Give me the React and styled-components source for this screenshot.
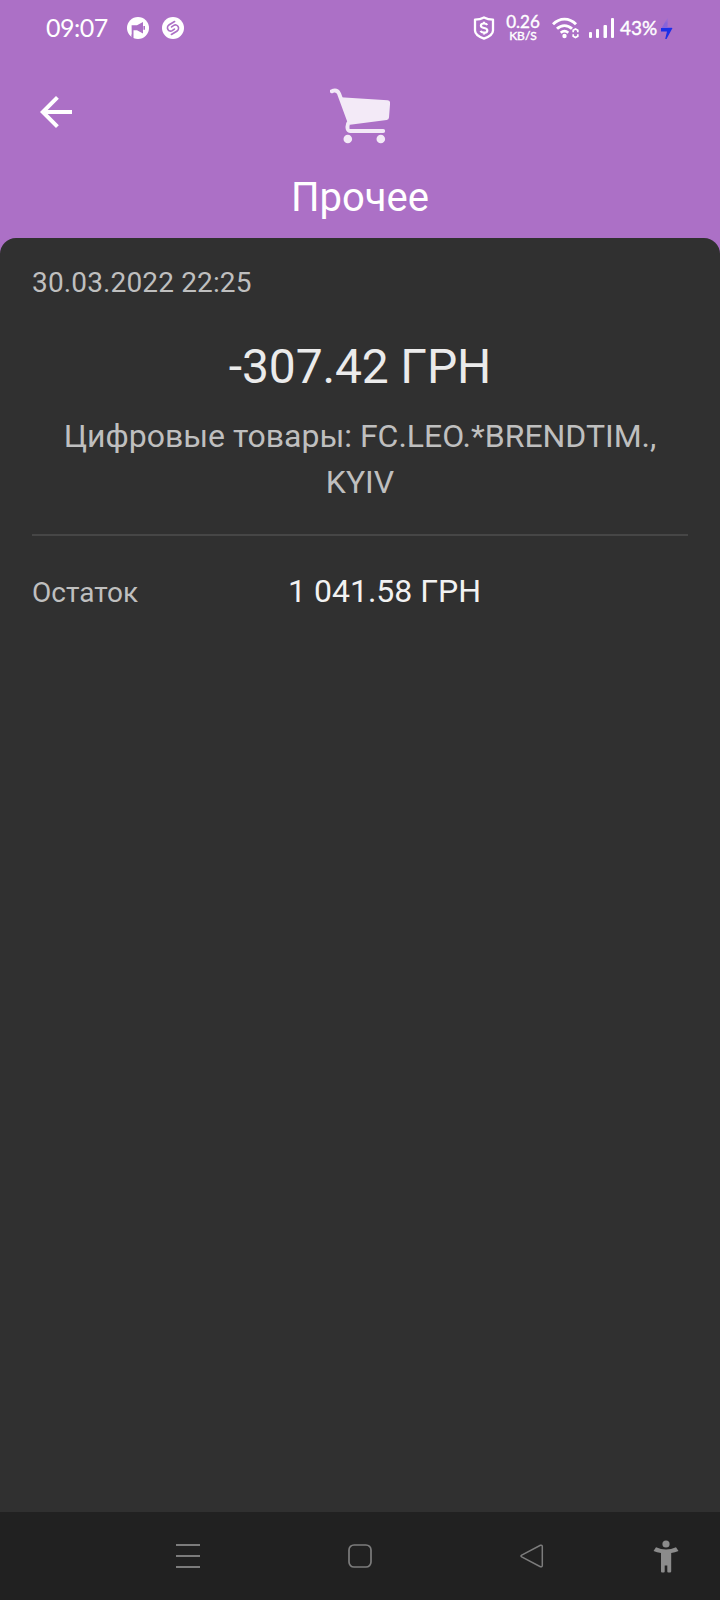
import React from 'react';
import styled, { createGlobalStyle } from 'styled-components';

const GlobalStyle = createGlobalStyle`
  * {
    box-sizing: border-box;
  }
  body {
    margin: 0;
    background-color: #ac70c6;
    font-family: Roboto, sans-serif;
  }
  svg {
    display: block;
    flex-shrink: 0;
  }
`;

const Screen = styled.div`
  display: flex;
  flex-direction: column;
  width: 720px;
  height: 1600px;
  background-color: #ac70c6;
`;

const StatusBar = styled.div`
  display: flex;
  justify-content: space-between;
  align-items: center;
  height: 56px;
  padding: 0 47px 0 46px;
  color: #ffffff;
  font-family: Lato, sans-serif;
`;
const StatusGroup = styled.div`
  display: flex;
  align-items: center;
  gap: ${({ $gap }) => $gap || 0}px;
`;
const Clock = styled.span`
  width: 68px;
  padding-bottom: 2px;
  font-size: 25px;
  line-height: 30px;
  letter-spacing: -0.5px;
`;
const Speed = styled.div`
  display: flex;
  flex-direction: column;
  align-items: center;
  gap: 1px;
  width: 36px;
  margin: 0 11px 0 10px;
  -webkit-text-stroke: 0.4px #ffffff;
`;
const SpeedValue = styled.span`
  font-size: 17px;
  line-height: 14px;
`;
const SpeedUnit = styled.span`
  font-size: 12px;
  line-height: 11px;
`;
const Battery = styled.span`
  width: 41px;
  margin-left: 5px;
  padding-bottom: 1px;
  font-size: 19px;
  line-height: 24px;
  -webkit-text-stroke: 0.4px #ffffff;
`;

const Header = styled.header`
  height: 182px;
  padding: 32px 32px 0;
`;
const HeaderRow = styled.div`
  display: grid;
  grid-template-columns: 1fr auto 1fr;
  align-items: start;
  height: 56px;
`;
const BackButton = styled.button`
  width: 48px;
  height: 48px;
  padding: 0;
  border: none;
  background: none;
  color: #ffffff;
`;
const Title = styled.h1`
  margin: 30px 0 0;
  color: #ffffff;
  font-size: 40px;
  font-weight: 400;
  line-height: 48px;
  text-align: center;
`;

const Card = styled.main`
  flex: 1;
  padding: 29px 32px 0;
  border-radius: 16px 16px 0 0;
  background-color: #303030;
`;
const DateText = styled.p`
  margin: 0;
  color: #bfbfbf;
  font-size: 28px;
  line-height: 32px;
  letter-spacing: 0.14px;
`;
const Amount = styled.p`
  margin: 40px 0 0;
  color: #ebebeb;
  font-size: 48px;
  line-height: 56px;
  letter-spacing: -0.15px;
  text-align: center;
`;
const Description = styled.p`
  margin: 18px 0 0;
  padding: 0 24px;
  color: #bfbfbf;
  font-size: 32px;
  line-height: 46px;
  letter-spacing: -0.02px;
  text-align: center;
`;
const Divider = styled.hr`
  height: 2px;
  margin: 29px 0 0;
  border: none;
  background-color: #464646;
`;
const Row = styled.div`
  display: grid;
  grid-template-columns: 256px 1fr;
  align-items: baseline;
  margin-top: 35px;
  line-height: 40px;
`;
const Label = styled.span`
  color: #bfbfbf;
  font-size: 28px;
`;
const Value = styled.span`
  color: #f2f2f2;
  font-size: 32px;
`;

const NavBar = styled.nav`
  display: grid;
  grid-template-columns: repeat(3, 172px) 95px;
  align-items: center;
  justify-items: center;
  height: 88px;
  padding-left: 102px;
  background-color: #212121;
  color: #7c7c7c;
`;

const MegaphoneIcon = () => (
  <svg width="22" height="22" viewBox="0 0 22 22">
    <circle cx="11" cy="11" r="11" fill="#fff" />
    <path
      d="M4 8.300h6l6-3.300v11.500l-6-3.300H6.500V22H4.500z"
      fill="#ac70c6"
    />
    <path d="M17.200 9v3.800" stroke="#ac70c6" strokeWidth="1.600" />
    <path d="M3.600 8v9.500" stroke="#fff" strokeWidth="2" />
  </svg>
);

const ShazamIcon = () => (
  <svg width="22" height="22" viewBox="0 0 22 22">
    <circle cx="11" cy="11" r="11" fill="#fff" />
    <g
      fill="none"
      stroke="#ac70c6"
      strokeWidth="1.700"
      strokeLinecap="round"
    >
      <path d="M12.600 4.600L7.200 7.800a3.500 3.500 0 0 0-1.200 4.800c.9 1.500 2.800 1.900 4.200 1l2.200-1.500" />
      <path d="M9.400 17.400l5.400-3.200a3.500 3.500 0 0 0 1.200-4.800c-.9-1.500-2.800-1.900-4.200-1L9.600 9.900" />
    </g>
  </svg>
);

const ShieldIcon = () => (
  <svg width="22" height="24" viewBox="0 0 22 24" fill="none" stroke="#fff">
    <path
      d="M11 1.400c2.800 1.600 5.700 2.200 9 2.200V14.500c0 4-4.500 6.500-9 8.200C6.500 21 2 18.500 2 14.500V3.600c3.300 0 6.200-.6 9-2.200z"
      strokeWidth="2.300"
      strokeLinejoin="round"
    />
    <path
      d="M14.200 9c-.5-1.100-1.700-1.500-3.200-1.500-1.800 0-3.100.8-3.100 2.200 0 3.200 6.400 1.500 6.400 4.700 0 1.500-1.400 2.300-3.300 2.300-1.700 0-3-.6-3.500-1.800M11 5.700v1.900M11 16.500v2"
      strokeWidth="2.200"
    />
  </svg>
);

const WifiIcon = () => (
  <svg width="27" height="22" viewBox="0 0 27 22" fill="none" stroke="#fff">
    <path d="M1 7.200C7.800.4 17.200.4 24 7.200" strokeWidth="2.900" />
    <path d="M5 11.800c4.500-4.300 10.500-4.300 15 0" strokeWidth="2.900" />
    <path d="M8.700 15.800c2.300-2.100 5.300-2.100 7.600 0" strokeWidth="2.600" />
    <circle cx="12.500" cy="19" r="2.200" fill="#fff" stroke="none" />
    <path
      d="M21.200 15.200v-2l2.300-1.300 2.300 1.300v2M21.200 17.200v2l2.300 1.300 2.300-1.300v-2"
      strokeWidth="1.700"
    />
  </svg>
);

const SignalIcon = () => (
  <svg width="26" height="20" viewBox="0 0 26 20" fill="#fff">
    <rect x="0" y="14" width="3" height="6" rx="1" />
    <rect x="7" y="11" width="3" height="9" rx="1" />
    <rect x="14.500" y="7" width="3.500" height="13" rx="1" />
    <rect x="22" y="0" width="3" height="20" rx="1" />
  </svg>
);

const BoltIcon = () => (
  <svg width="12" height="22" viewBox="0 0 12 22">
    <defs>
      <linearGradient id="bolt" x1="0" y1="0" x2="0" y2="1">
        <stop offset="0" stopColor="#8f6bdd" stopOpacity="0.1" />
        <stop offset="0.5" stopColor="#8663dc" stopOpacity="0.9" />
      </linearGradient>
    </defs>
    <path d="M7 0L0 12h11V10H6.500z" fill="url(#bolt)" />
    <path d="M0 11H11.500L5.500 22H4.200L6 14.500H0z" fill="#1c2fe8" />
  </svg>
);

const ArrowBackIcon = () => (
  <svg width="48" height="48" viewBox="0 0 24 24" fill="currentColor">
    <path d="M20 11H7.830l5.590-5.590L12 4l-8 8 8 8 1.410-1.410L7.830 13H20v-2z" />
  </svg>
);

const CartIcon = () => (
  <svg width="60" height="56" viewBox="0 0 60 56" fill="#f3eaf7">
    <path
      d="M1.800 3.300L3.500 2.700C6 2.200 7.800 3 9 5.500L19.300 33.500C17 36.500 17 38 17.700 41Q18.300 43 20.500 43H53.200"
      fill="none"
      stroke="#f3eaf7"
      strokeWidth="3.900"
      strokeLinecap="round"
      strokeLinejoin="round"
    />
    <path d="M10.500 9.300L57.500 12.300Q60.300 12.600 60.100 15.100L59 29.500Q58.800 31.600 56.700 31.900L20 36.700z" />
    <circle cx="17.800" cy="51" r="4.300" />
    <circle cx="50.800" cy="51" r="4.300" />
  </svg>
);

const RecentsIcon = () => (
  <svg width="24" height="24" viewBox="0 0 24 24" fill="currentColor">
    <rect y="0" width="24" height="2" />
    <rect y="11" width="24" height="2" />
    <rect y="22" width="24" height="2" />
  </svg>
);

const HomeIcon = () => (
  <svg width="24" height="24" viewBox="0 0 24 24" fill="none">
    <rect
      x="1"
      y="1"
      width="22"
      height="22"
      rx="5"
      stroke="currentColor"
      strokeWidth="1.700"
    />
  </svg>
);

const BackIcon = () => (
  <svg width="24" height="24" viewBox="0 0 24 24" fill="none">
    <path
      d="M1.700 11.100L20.400 1.300Q22.300.7 22.300 2.500V21.500Q22.300 23.300 20.400 22.700L1.700 12.900Q.2 12 1.700 11.100z"
      stroke="currentColor"
      strokeWidth="1.500"
    />
  </svg>
);

const AccessibilityIcon = () => (
  <svg width="26" height="33" viewBox="0 0 26 33" fill="#8b8b8b">
    <circle cx="13" cy="4" r="3.600" />
    <path d="M3 7.200Q8 9.400 13 9.400T23 7.200L25.500 10.900Q22 12.500 18.200 13V31.500Q18.200 32.500 17 32.500H15.300Q14.300 32.500 14.300 31.500V25.500H11.700V31.500Q11.700 32.500 10.700 32.500H9Q8 32.500 8 31.500V13Q4 12.500.5 10.900z" />
  </svg>
);

export default function App() {
  return (
    <>
      <GlobalStyle />
      <Screen>
        <StatusBar>
          <StatusGroup $gap={13}>
            <Clock>09:07</Clock>
            <MegaphoneIcon />
            <ShazamIcon />
          </StatusGroup>
          <StatusGroup>
            <ShieldIcon />
            <Speed>
              <SpeedValue>0.26</SpeedValue>
              <SpeedUnit>KB/S</SpeedUnit>
            </Speed>
            <StatusGroup $gap={10}>
              <WifiIcon />
              <SignalIcon />
            </StatusGroup>
            <Battery>43%</Battery>
            <BoltIcon />
          </StatusGroup>
        </StatusBar>

        <Header>
          <HeaderRow>
            <BackButton aria-label="Назад">
              <ArrowBackIcon />
            </BackButton>
            <CartIcon />
          </HeaderRow>
          <Title>Прочее</Title>
        </Header>

        <Card>
          <DateText>30.03.2022 22:25</DateText>
          <Amount>-307.42 ГРН</Amount>
          <Description>Цифровые товары: FC.LEO.*BRENDTIM., KYIV</Description>
          <Divider />
          <Row>
            <Label>Остаток</Label>
            <Value>1 041.58 ГРН</Value>
          </Row>
        </Card>

        <NavBar>
          <RecentsIcon />
          <HomeIcon />
          <BackIcon />
          <AccessibilityIcon />
        </NavBar>
      </Screen>
    </>
  );
}
